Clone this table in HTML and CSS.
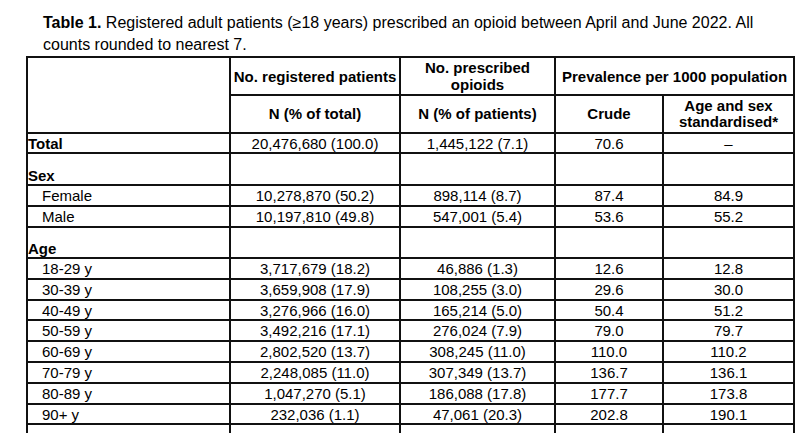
FILE: index.html
```html
<!DOCTYPE html>
<html lang="en">
<head>
<meta charset="utf-8">
<title>Table 1</title>
<link rel="stylesheet" href="styles.css">
</head>
<body>
<div class="page">
  <p class="caption"><b>Table 1. </b>Registered adult patients (≥18 years) prescribed an opioid between April and June 2022. All counts rounded to nearest 7.</p>
  <table class="data">
    <colgroup>
      <col class="c1"><col class="c2"><col class="c3"><col class="c4"><col class="c5">
    </colgroup>
    <thead>
      <tr class="h1">
        <th rowspan="2"></th>
        <th>No. registered patients</th>
        <th>No. prescribed<br>opioids</th>
        <th colspan="2">Prevalence per 1000 population</th>
      </tr>
      <tr class="h2">
        <th>N (% of total)</th>
        <th>N (% of patients)</th>
        <th>Crude</th>
        <th>Age and sex<br>standardised*</th>
      </tr>
    </thead>
    <tbody>
      <tr class="r20"><td class="lab bold">Total</td><td>20,476,680 (100.0)</td><td>1,445,122 (7.1)</td><td>70.6</td><td>–</td></tr>
      <tr class="grp g1"><td class="lab bold">Sex</td><td></td><td></td><td></td><td></td></tr>
      <tr class="r21"><td class="lab sub">Female</td><td>10,278,870 (50.2)</td><td>898,114 (8.7)</td><td>87.4</td><td>84.9</td></tr>
      <tr class="r21"><td class="lab sub">Male</td><td>10,197,810 (49.8)</td><td>547,001 (5.4)</td><td>53.6</td><td>55.2</td></tr>
      <tr class="grp g2"><td class="lab bold">Age</td><td></td><td></td><td></td><td></td></tr>
      <tr class="r21"><td class="lab sub">18-29 y</td><td>3,717,679 (18.2)</td><td>46,886 (1.3)</td><td>12.6</td><td>12.8</td></tr>
      <tr class="r21"><td class="lab sub">30-39 y</td><td>3,659,908 (17.9)</td><td>108,255 (3.0)</td><td>29.6</td><td>30.0</td></tr>
      <tr class="r20"><td class="lab sub">40-49 y</td><td>3,276,966 (16.0)</td><td>165,214 (5.0)</td><td>50.4</td><td>51.2</td></tr>
      <tr class="r21"><td class="lab sub">50-59 y</td><td>3,492,216 (17.1)</td><td>276,024 (7.9)</td><td>79.0</td><td>79.7</td></tr>
      <tr class="r21"><td class="lab sub">60-69 y</td><td>2,802,520 (13.7)</td><td>308,245 (11.0)</td><td>110.0</td><td>110.2</td></tr>
      <tr class="r21"><td class="lab sub">70-79 y</td><td>2,248,085 (11.0)</td><td>307,349 (13.7)</td><td>136.7</td><td>136.1</td></tr>
      <tr class="r21"><td class="lab sub">80-89 y</td><td>1,047,270 (5.1)</td><td>186,088 (17.8)</td><td>177.7</td><td>173.8</td></tr>
      <tr class="r20"><td class="lab sub">90+ y</td><td>232,036 (1.1)</td><td>47,061 (20.3)</td><td>202.8</td><td>190.1</td></tr>
      <tr class="r21"><td class="lab"></td><td></td><td></td><td></td><td></td></tr>
    </tbody>
  </table>
</div>
</body>
</html>
```

FILE: styles.css
```css
* { box-sizing: border-box; }
html, body { margin: 0; padding: 0; background: #fff; }
body {
  font-family: "Liberation Sans", Arial, sans-serif;
  color: #000;
}
.page {
  padding: 12px 0 0 26px;
}
.caption {
  margin: 0 0 0 17px;
  width: 752px;
  font-size: 16px;
  line-height: 22px;
}
.data {
  border-collapse: separate;
  border-spacing: 0;
  table-layout: fixed;
  width: 769px;
  border-top: 2px solid #111;
  border-left: 2px solid #111;
  font-size: 15px;
  line-height: 17px;
}
.c1 { width: 203px; }
.c2 { width: 170px; }
.c3 { width: 155px; }
.c4 { width: 108px; }
.c5 { width: 131px; }
.data th, .data td {
  border-right: 2px solid #111;
  border-bottom: 2px solid #111;
  padding: 0;
  text-align: center;
  vertical-align: middle;
  white-space: nowrap;
}
.data th {
  font-weight: bold;
}
.h1 th { height: 38px; line-height: 17px; }
.h2 th { height: 38px; line-height: 16px; }
.r20 td { height: 20px; }
.r21 td { height: 21px; }
.g1 td { height: 32px; }
.g2 td { height: 31px; }
.grp td { vertical-align: bottom; }
.data td.lab { text-align: left; }
.data td.bold { font-weight: bold; }
.data td.sub { padding-left: 14px; }
```
